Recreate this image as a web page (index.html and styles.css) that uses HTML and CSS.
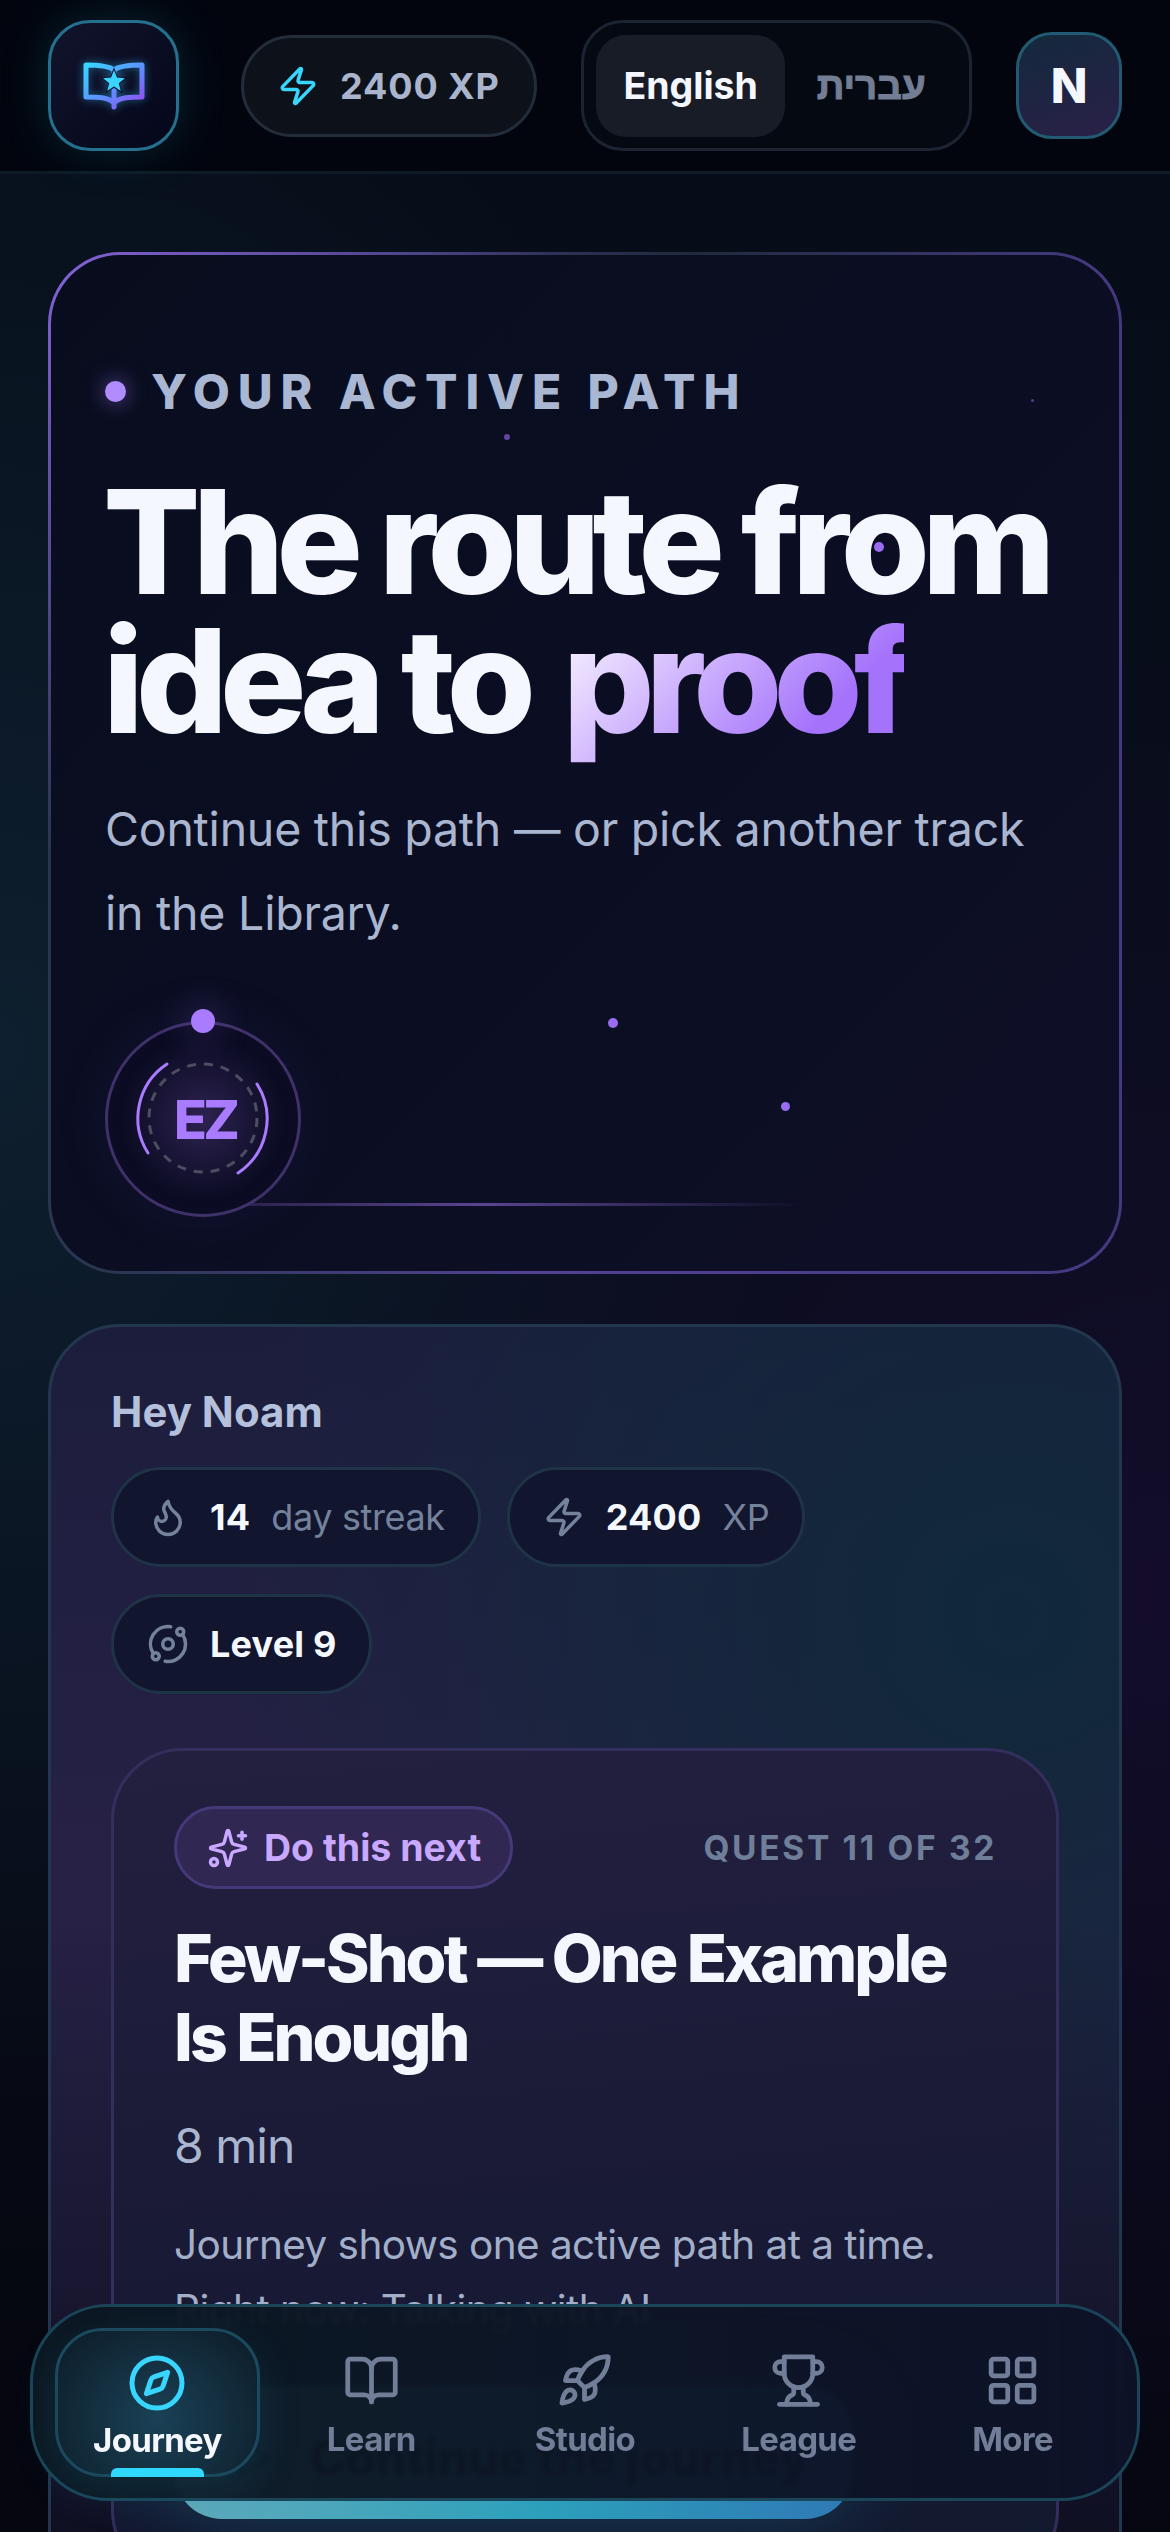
FILE: index.html
```html
<!DOCTYPE html>
<html lang="en">

<head>
    <meta charset="utf-8">
    <title>Journey</title>
    <link rel="stylesheet" href="styles.css">
</head>

<body>
    <div class="page">
        <header class="topbar">
            <div class="brand">
                <svg class="brand-icon" viewBox="0 0 62 48" fill="none">
                    <defs>
                        <linearGradient id="bookGrad" x1="0" y1="0" x2="1" y2="1">
                            <stop offset="0" stop-color="#38d6ff" />
                            <stop offset="0.55" stop-color="#5f8dff" />
                            <stop offset="1" stop-color="#9b45f0" />
                        </linearGradient>
                    </defs>
                    <path stroke="url(#bookGrad)" stroke-width="5" stroke-linejoin="round" stroke-linecap="round" d="M31 8C26 4 14 3 3 3V35C14 35 26 35 31 41C36 35 48 35 59 35V3C48 3 36 4 31 8V45" />
                    <polygon fill="#38d6ff" stroke="#0b0d24" stroke-width="2" paint-order="stroke" points="31,8 34,15.6 42,16.2 35.8,21.2 37.8,29 31,24.6 24.2,29 26.2,21.2 20,16.2 28,15.6" />
                </svg>
            </div>
            <div class="topbar-right">
                <div class="xp-pill">
                    <svg class="icon icon-cyan" viewBox="0 0 24 24"><path d="M4 14a1 1 0 0 1-.78-1.63l9.9-10.2a.5.5 0 0 1 .86.46l-1.92 6.02A1 1 0 0 0 13 10h7a1 1 0 0 1 .78 1.63l-9.9 10.2a.5.5 0 0 1-.86-.46l1.92-6.02A1 1 0 0 0 11 14z" /></svg>
                    <span>2400 XP</span>
                </div>
                <div class="lang-switch">
                    <span class="lang lang-active">English</span>
                    <span class="lang lang-he" lang="he" dir="rtl">עברית</span>
                </div>
                <div class="avatar">N</div>
            </div>
        </header>

        <main class="content">
            <section class="hero">
                <i class="spark spark-a"></i>
                <i class="spark spark-b"></i>
                <i class="spark spark-c"></i>
                <i class="spark spark-d"></i>
                <i class="spark spark-e"></i>
                <i class="hero-line"></i>

                <div class="eyebrow"><i class="eyebrow-dot"></i>YOUR ACTIVE PATH</div>
                <h1 class="hero-title">The route from idea to <span class="hero-accent">proof</span></h1>
                <p class="hero-text">Continue this path — or pick another track in the Library.</p>

                <div class="orb">
                    <i class="orb-dot"></i>
                    <svg class="orb-rings" viewBox="0 0 196 196" fill="none">
                        <circle cx="98" cy="97" r="54" stroke="#4b4d60" stroke-width="3" stroke-dasharray="9 8" />
                        <path stroke="#a97bff" stroke-width="3" stroke-linecap="round" d="M62 43A65 65 0 0 0 43 132" />
                        <path stroke="#a97bff" stroke-width="3" stroke-linecap="round" d="M152 63A65 65 0 0 1 133 152" />
                    </svg>
                    <span class="orb-label">EZ</span>
                </div>
            </section>

            <section class="progress-card">
                <div class="greeting">Hey Noam</div>
                <div class="stats">
                    <div class="stat">
                        <svg class="icon" viewBox="0 0 24 24"><path d="M8.5 14.5A2.5 2.5 0 0 0 11 12c0-1.38-.5-2-1-3-1.072-2.143-.224-4.054 2-6 .5 2.5 2 4.9 4 6.5 2 1.6 3 3.5 3 5.5a7 7 0 1 1-14 0c0-1.153.433-2.294 1-3a2.5 2.5 0 0 0 2.5 2.5z" /></svg>
                        <b>14</b><span>day streak</span>
                    </div>
                    <div class="stat">
                        <svg class="icon" viewBox="0 0 24 24"><path d="M4 14a1 1 0 0 1-.78-1.63l9.9-10.2a.5.5 0 0 1 .86.46l-1.92 6.02A1 1 0 0 0 13 10h7a1 1 0 0 1 .78 1.63l-9.9 10.2a.5.5 0 0 1-.86-.46l1.92-6.02A1 1 0 0 0 11 14z" /></svg>
                        <b>2400</b><span>XP</span>
                    </div>
                    <div class="stat">
                        <svg class="icon" viewBox="0 0 24 24"><circle cx="12" cy="12" r="3" /><circle cx="19" cy="5" r="2" /><circle cx="5" cy="19" r="2" /><path d="M10.4 21.9a10 10 0 0 0 9.941-15.416" /><path d="M13.5 2.1a10 10 0 0 0-9.841 15.416" /></svg>
                        <b>Level 9</b>
                    </div>
                </div>

                <div class="quest">
                    <div class="quest-head">
                        <div class="chip">
                            <svg class="icon" viewBox="0 0 24 24"><path d="M9.937 15.5A2 2 0 0 0 8.5 14.063l-6.135-1.582a.5.5 0 0 1 0-.962L8.5 9.936A2 2 0 0 0 9.937 8.5l1.582-6.135a.5.5 0 0 1 .963 0L14.063 8.5A2 2 0 0 0 15.5 9.937l6.135 1.581a.5.5 0 0 1 0 .964L15.5 14.063a2 2 0 0 0-1.437 1.437l-1.582 6.135a.5.5 0 0 1-.963 0z" /><path d="M20 3v4" /><path d="M22 5h-4" /><circle cx="4" cy="20" r="2" /></svg>
                            Do this next
                        </div>
                        <div class="quest-count">QUEST 11 OF 32</div>
                    </div>
                    <h2 class="quest-title">Few-Shot — One Example Is Enough</h2>
                    <div class="quest-time">8 min</div>
                    <p class="quest-text">Journey shows one active path at a time.<br>Right now: Talking with AI</p>
                    <div class="quest-btn">
                        <svg class="icon" viewBox="0 0 24 24"><path d="M6 3l14 9-14 9z" /></svg>
                        Continue the journey
                    </div>
                </div>
            </section>
        </main>

        <nav class="tabbar">
            <div class="tab tab-active">
                <svg class="icon" viewBox="0 0 24 24"><circle cx="12" cy="12" r="10" /><path d="m16.24 7.76-1.804 5.411a2 2 0 0 1-1.265 1.265L7.76 16.24l1.804-5.411a2 2 0 0 1 1.265-1.265z" /></svg>
                <span>Journey</span>
            </div>
            <div class="tab">
                <svg class="icon" viewBox="0 0 24 24"><path d="M12 7v14" /><path d="M3 18a1 1 0 0 1-1-1V4a1 1 0 0 1 1-1h5a4 4 0 0 1 4 4 4 4 0 0 1 4-4h5a1 1 0 0 1 1 1v13a1 1 0 0 1-1 1h-6a3 3 0 0 0-3 3 3 3 0 0 0-3-3z" /></svg>
                <span>Learn</span>
            </div>
            <div class="tab">
                <svg class="icon" viewBox="0 0 24 24"><path d="M4.5 16.5c-1.5 1.26-2 5-2 5s3.74-.5 5-2c.71-.84.7-2.13-.09-2.91a2.18 2.18 0 0 0-2.91-.09z" /><path d="m12 15-3-3a22 22 0 0 1 2-3.95A12.88 12.88 0 0 1 22 2c0 2.72-.78 7.5-6 11a22.35 22.35 0 0 1-4 2z" /><path d="M9 12H4s.55-3.03 2-4c1.62-1.08 5 0 5 0" /><path d="M12 15v5s3.03-.55 4-2c1.08-1.62 0-5 0-5" /></svg>
                <span>Studio</span>
            </div>
            <div class="tab">
                <svg class="icon" viewBox="0 0 24 24"><path d="M6 9H4.5a2.5 2.5 0 0 1 0-5H6" /><path d="M18 9h1.5a2.5 2.5 0 0 0 0-5H18" /><path d="M4 22h16" /><path d="M10 14.66V17c0 .55-.47.98-.97 1.21C7.85 18.75 7 20.24 7 22" /><path d="M14 14.66V17c0 .55.47.98.97 1.21C16.15 18.75 17 20.24 17 22" /><path d="M18 2H6v7a6 6 0 0 0 12 0V2Z" /></svg>
                <span>League</span>
            </div>
            <div class="tab">
                <svg class="icon" viewBox="0 0 24 24"><rect x="3" y="3" width="7" height="7" rx="1" /><rect x="14" y="3" width="7" height="7" rx="1" /><rect x="14" y="14" width="7" height="7" rx="1" /><rect x="3" y="14" width="7" height="7" rx="1" /></svg>
                <span>More</span>
            </div>
        </nav>
    </div>
</body>

</html>
```

FILE: styles.css
```css
* {
    box-sizing: border-box;
}

html,
body {
    margin: 0;
    padding: 0;
    height: 2532px;
    overflow: hidden;
    background-color: #04070f;
    font-family: Inter, 'Noto Sans', sans-serif;
}

.page {
    position: relative;
    width: 1170px;
    height: 2532px;
    overflow: hidden;
    background:
        radial-gradient(900px 1000px at 100% 1600px, rgba(20, 13, 44, 0.9), transparent),
        radial-gradient(800px 1100px at 0 1050px, rgba(14, 32, 48, 0.95), transparent),
        linear-gradient(180deg, #060d18 0%, #080d1a 50%, #05060f 100%);
}

.icon {
    width: 42px;
    height: 42px;
    flex: none;
    fill: none;
    stroke: currentColor;
    stroke-width: 2;
    stroke-linecap: round;
    stroke-linejoin: round;
}

.icon-cyan {
    color: #38d6ff;
}

/* top bar */
.topbar {
    position: relative;
    display: flex;
    align-items: center;
    height: 174px;
    padding: 0 48px;
    background-color: #02050e;
    border-bottom: 3px solid #0e1a24;
}

.brand {
    display: flex;
    align-items: center;
    justify-content: center;
    width: 131px;
    height: 131px;
    border: 3px solid #24718f;
    border-radius: 42px;
    background: linear-gradient(135deg, #12142c, #04071a);
    box-shadow: 0 0 48px rgba(34, 160, 190, 0.2);
}

.brand-icon {
    width: 62px;
    height: 48px;
    filter: drop-shadow(0 0 4px rgba(56, 190, 255, 0.5));
}

.topbar-right {
    display: flex;
    align-items: center;
    gap: 44px;
    margin-left: auto;
}

.xp-pill {
    display: flex;
    align-items: center;
    gap: 21px;
    width: 296px;
    height: 102px;
    padding-left: 33px;
    border: 3px solid #232c39;
    border-radius: 51px;
    background-color: #0d121a;
    color: #aab4cc;
    font-size: 36px;
    font-weight: 700;
    letter-spacing: 0.025em;
}

.lang-switch {
    display: flex;
    align-items: center;
    width: 391px;
    height: 131px;
    padding: 0 12px;
    border: 3px solid #1c2331;
    border-radius: 42px;
    background-color: #050912;
}

.lang {
    display: flex;
    align-items: center;
    justify-content: center;
    height: 102px;
    font-size: 37.5px;
    font-weight: 700;
}

.lang-active {
    width: 192px;
    border-radius: 30px;
    background-color: #181c27;
    color: #f5f7ff;
}

.lang-he {
    width: 174px;
    color: #737d93;
    font-family: 'Liberation Sans', sans-serif;
    font-size: 38.5px;
    -webkit-text-stroke: 1px #737d93;
}

.avatar {
    display: flex;
    align-items: center;
    justify-content: center;
    width: 106px;
    height: 107px;
    border: 3px solid #215a72;
    border-radius: 36px;
    background: linear-gradient(160deg, #13293c, #2a2048);
    color: #f5f7ff;
    font-size: 48px;
    font-weight: 800;
}

/* main column */
.content {
    display: flex;
    flex-direction: column;
    gap: 50px;
    padding: 78px 48px 0;
}

.hero {
    position: relative;
    height: 1022px;
    padding: 109px 54px 0;
    border: 3px solid transparent;
    border-radius: 72px;
    background:
        linear-gradient(135deg, #080d1e, #0e0f27) padding-box,
        radial-gradient(500px 600px at 0 0, #8563d8, transparent) border-box,
        radial-gradient(420px 70px at 60% 0, #1d2a3a, transparent) border-box,
        linear-gradient(90deg, #2a3550 5%, #524294 45%, #443980) border-box;
}

.spark {
    position: absolute;
    border-radius: 50%;
    background-color: #9a6cf0;
}

.spark-a { left: 453px; top: 179px; width: 6px; height: 6px; opacity: 0.6; }
.spark-b { left: 980px; top: 144px; width: 3px; height: 3px; opacity: 0.5; }
.spark-c { left: 823px; top: 287px; width: 10px; height: 10px; z-index: 2; }
.spark-d { left: 557px; top: 763px; width: 10px; height: 10px; }
.spark-e { left: 730px; top: 847px; width: 9px; height: 9px; }

.hero-line {
    position: absolute;
    left: 165px;
    top: 948px;
    width: 590px;
    height: 3px;
    background: linear-gradient(90deg, #241d44, #5a4590 45%, transparent);
}

.eyebrow {
    display: flex;
    align-items: center;
    height: 54px;
    color: #a9b7d3;
    font-size: 48px;
    font-weight: 800;
    letter-spacing: 0.165em;
}

.eyebrow-dot {
    width: 21px;
    height: 21px;
    margin-right: 25px;
    border-radius: 50%;
    background-color: #b18cff;
    box-shadow: 0 0 21px rgba(168, 120, 255, 0.6);
}

.hero-title {
    position: relative;
    margin: 54px 0 0 -2px;
    color: #f5f7ff;
    font-size: 144px;
    font-weight: 800;
    line-height: 139px;
    letter-spacing: -0.054em;
}

.hero-accent {
    margin-left: 11px;
    background: linear-gradient(135deg, #f5eeff 10%, #a472fb 75%);
    -webkit-background-clip: text;
    background-clip: text;
    color: transparent;
    letter-spacing: -0.062em;
}

.hero-text {
    margin: 37px 0 0;
    color: #aab6d0;
    font-size: 46.5px;
    line-height: 84px;
    letter-spacing: -0.005em;
}

.orb {
    position: relative;
    display: flex;
    align-items: center;
    justify-content: center;
    width: 196px;
    height: 196px;
    margin-top: 66px;
    border: 3px solid #3f3169;
    border-radius: 50%;
    background: radial-gradient(circle, #2d2250 0%, #0a0b22 62%, #0c0c24 75%, #12102c 100%);
    box-shadow: 0 0 60px rgba(120, 90, 220, 0.08);
}

.orb-dot {
    position: absolute;
    left: 83px;
    top: -15px;
    width: 24px;
    height: 24px;
    border-radius: 50%;
    background-color: #a97bff;
    box-shadow: 0 0 36px rgba(168, 120, 255, 0.4);
}

.orb-rings {
    position: absolute;
    left: -3px;
    top: -3px;
    width: 196px;
    height: 196px;
}

.orb-label {
    position: relative;
    left: 2px;
    color: #a97bff;
    font-size: 54px;
    font-weight: 800;
    letter-spacing: -0.07em;
}

/* progress card */
.progress-card {
    padding: 53px 60px 60px;
    border: 3px solid #22374e;
    border-radius: 72px;
    background:
        linear-gradient(180deg, transparent 45%, rgba(6, 8, 20, 0.75) 95%),
        radial-gradient(800px 800px at 90% 22%, #10293a, transparent),
        linear-gradient(180deg, #1c1d3d, #262145 40%);
}

.greeting {
    color: #b4c0dc;
    font-size: 42px;
    font-weight: 700;
    line-height: 63px;
}

.stats {
    display: flex;
    flex-wrap: wrap;
    gap: 27px 26px;
    margin-top: 24px;
}

.stat {
    display: flex;
    align-items: center;
    gap: 21px;
    height: 100px;
    padding: 0 33px 0 33px;
    border: 3px solid #1f3347;
    border-radius: 50px;
    background-color: #12152e;
    color: #75829c;
    font-size: 36px;
    letter-spacing: -0.01em;
}

.stat b {
    color: #f5f7ff;
    font-weight: 700;
    letter-spacing: 0.005em;
}

.quest {
    margin-top: 54px;
    padding: 55px 60px 60px;
    border: 3px solid #332e5c;
    border-radius: 72px;
    background: linear-gradient(175deg, #23203f 0%, #191a36 55%, #121a2f 100%);
}

.quest-head {
    display: flex;
    align-items: center;
    justify-content: space-between;
}

.chip {
    display: flex;
    align-items: center;
    gap: 15px;
    width: 339px;
    height: 83px;
    padding-left: 30px;
    border: 3px solid #45397a;
    border-radius: 42px;
    background-color: #302752;
    color: #c9a9ff;
    font-size: 37.5px;
    font-weight: 700;
}

.quest-count {
    margin-right: -1px;
    color: #6f7f99;
    font-size: 33.5px;
    font-weight: 700;
    letter-spacing: 0.08em;
}

.quest-title {
    margin: 30px 0 0;
    color: #f5f7ff;
    font-size: 66px;
    font-weight: 800;
    line-height: 79px;
    letter-spacing: -0.045em;
}

.quest-time {
    margin-top: 33px;
    color: #aab6d0;
    font-size: 48px;
    line-height: 72px;
    letter-spacing: -0.02em;
}

.quest-text {
    margin: 30px 0 0;
    color: #a3afc9;
    font-size: 40.5px;
    line-height: 65px;
    letter-spacing: -0.014em;
}

.quest-btn {
    display: flex;
    align-items: center;
    gap: 34px;
    width: 679px;
    height: 133px;
    margin-top: 44px;
    padding: 10px 0 0 54px;
    border-radius: 48px;
    background: linear-gradient(95deg, #62abbb, #2ca0bb 55%, #2f78b5);
    box-shadow: 0 0 72px rgba(34, 180, 220, 0.22);
    color: #0a1020;
    font-size: 48px;
    font-weight: 800;
}

.quest-btn .icon {
    width: 48px;
    height: 48px;
}

/* bottom tabs */
.tabbar {
    position: absolute;
    left: 30px;
    top: 2304px;
    display: grid;
    grid-template-columns: repeat(5, 1fr);
    gap: 9px;
    width: 1110px;
    height: 197px;
    padding: 21px 22px 21px;
    border: 3px solid #1a4558;
    border-radius: 78px;
    background: linear-gradient(90deg, rgba(12, 24, 34, 0.965), rgba(14, 18, 40, 0.965));
    backdrop-filter: blur(2px);
}

.tab {
    position: relative;
    display: flex;
    flex-direction: column;
    align-items: center;
    padding-top: 24px;
    color: #727e97;
    font-size: 33px;
    font-weight: 700;
    letter-spacing: -0.02em;
}

.tab .icon {
    width: 57px;
    height: 57px;
    margin-bottom: 10px;
}

.tab-active {
    padding-top: 22px;
    border: 3px solid #1b4a5e;
    border-radius: 48px;
    background: radial-gradient(140px 130px at 50% 62%, #1a4156, #0c1a26);
    box-shadow: 0 15px 42px rgba(30, 120, 150, 0.2);
    color: #f5f7ff;
}

.tab-active .icon {
    width: 60px;
    height: 60px;
    margin-bottom: 7px;
    color: #38d6ff;
}

.tab-active::after {
    content: "";
    position: absolute;
    left: 53px;
    bottom: -3px;
    width: 93px;
    height: 9px;
    border-radius: 6px 6px 0 0;
    background-color: #30d8ff;
}
```
